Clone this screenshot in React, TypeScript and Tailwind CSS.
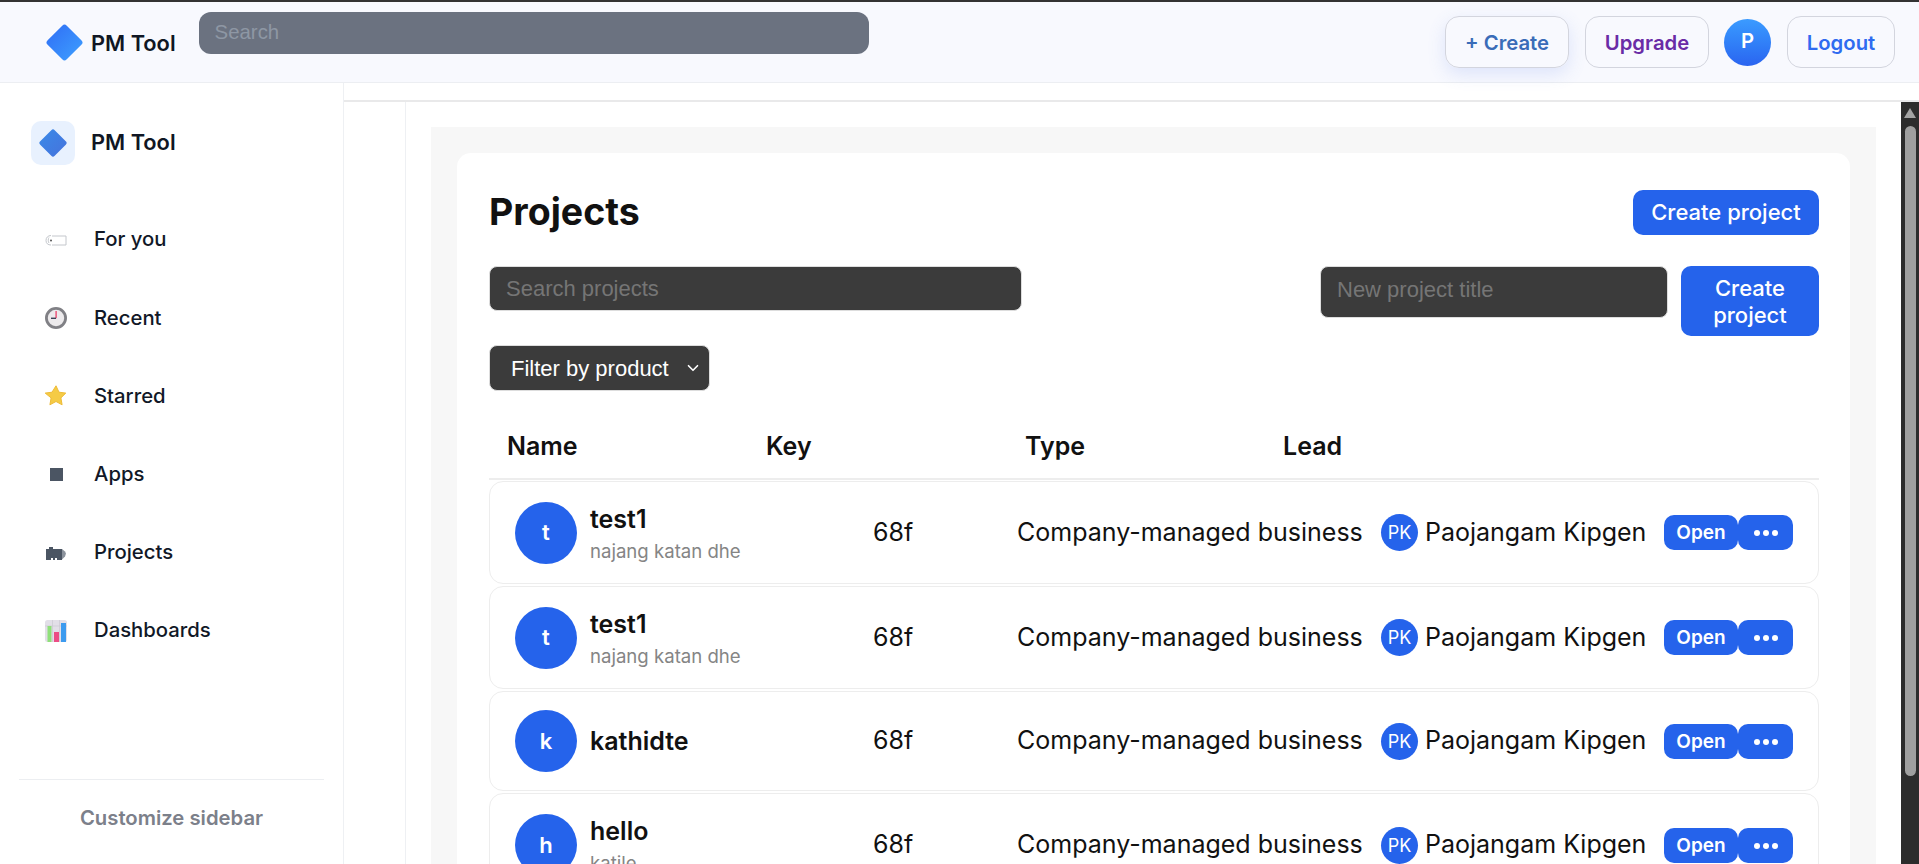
import { ChevronDown } from 'lucide-react';

const font = "font-['Inter',sans-serif]";

const projects = [
  { initial: 't', name: 'test1', desc: 'najang katan dhe', height: 'h-[103px]' },
  { initial: 't', name: 'test1', desc: 'najang katan dhe', height: 'h-[103px]' },
  { initial: 'k', name: 'kathidte', desc: '', height: 'h-[100px]' },
  { initial: 'h', name: 'hello', desc: 'katile', height: 'h-[104px]' },
];

function Diamond({ className, from, to, id }: { className: string; from: string; to: string; id: string }) {
  return (
    <svg viewBox="0 0 36 36" className={className}>
      <defs>
        <linearGradient id={id} x1="0" y1="0" x2="1" y2="1">
          <stop offset="0" stopColor={from} />
          <stop offset="1" stopColor={to} />
        </linearGradient>
      </defs>
      <path d="M15.8 1.6a3 3 0 0 1 4.4 0l14.2 14.2a3 3 0 0 1 0 4.4L20.2 34.4a3 3 0 0 1-4.4 0L1.6 20.2a3 3 0 0 1 0-4.4z" fill={`url(#${id})`} />
    </svg>
  );
}

function ForYouIcon() {
  return (
    <svg viewBox="0 0 22 12" className="w-[22px] h-[12px]">
      <path d="M7 2h14v9H7" fill="#fff" stroke="#c4c7cc" strokeWidth="1" />
      <path d="M6 1.5C3 1.5 1 3.5 1 6.5s2 4.5 5 4.5" fill="none" stroke="#c4c7cc" strokeWidth="1" />
      <path d="M4 3.5C3 4.5 3 8 4 9" fill="none" stroke="#c4c7cc" strokeWidth="1" />
      <circle cx="6" cy="6.5" r="1" fill="#555" />
    </svg>
  );
}

function ClockIcon() {
  return (
    <svg viewBox="0 0 22 22" className="w-[22px] h-[22px]">
      <circle cx="11" cy="11" r="9.6" fill="#eceaec" stroke="#808085" strokeWidth="2.800" />
      <rect x="10.4" y="4" width="1.4" height="7.2" fill="#ec4d72" />
      <rect x="6" y="10.6" width="5" height="1.4" fill="#3b4256" />
    </svg>
  );
}

function StarIcon() {
  return (
    <svg viewBox="0 0 22 22" className="w-[22px] h-[22px]">
      <path d="M11 .8l3 6.4 6.8.9-4.9 4.8 1.2 6.9-6.1-3.3-6.1 3.3 1.2-6.9L.2 8.1 7 7.2z" fill="#f5cb45" stroke="#eebb37" strokeWidth="1" strokeLinejoin="round" />
    </svg>
  );
}

function SquareIcon() {
  return <div className="w-[13px] h-[13px] bg-[#4b5563]" />;
}

function ProjectsIcon() {
  return (
    <svg viewBox="0 0 20 14" className="w-[20px] h-[14px]">
      <path d="M0 3h3V1h4v2h9v11H11v-2H9v2H7v-2H5v2H0z" fill="#4b5563" />
      <path d="M16 3l3 2.500 1 2-1 3-3 3z" fill="#8b929c" />
    </svg>
  );
}

function ChartIcon() {
  return (
    <svg viewBox="0 0 22 22" className="w-[22px] h-[22px]">
      <rect width="22" height="22" rx="2.500" fill="#e2dfe8" />
      <path d="M7.500 0v22M14.500 0v22M0 6h22" stroke="#cbc8d2" strokeWidth="0.700" />
      <rect x="2.500" y="6" width="4" height="16" fill="#8fe07a" />
      <rect x="9" y="12" width="5" height="10" fill="#ec4d85" />
      <rect x="16" y="3" width="5" height="19" fill="#3d9bef" />
    </svg>
  );
}

const navItems = [
  { label: 'For you', icon: <ForYouIcon /> },
  { label: 'Recent', icon: <ClockIcon /> },
  { label: 'Starred', icon: <StarIcon /> },
  { label: 'Apps', icon: <SquareIcon /> },
  { label: 'Projects', icon: <ProjectsIcon /> },
  { label: 'Dashboards', icon: <ChartIcon /> },
];

function Header() {
  return (
    <header className="h-[81px] shrink-0 flex items-center bg-[#f8f9fe] border-b border-[#eceef2] pl-[46px] pr-6">
      <Diamond id="hd" className="w-[37px] h-[37px]" from="#2f6df5" to="#3ea0ff" />
      <span className="ml-[8px] pt-[2px] text-[21.800px] font-semibold text-[#101624]">PM Tool</span>
      <input
        placeholder="Search"
        className="ml-[23px] mb-[18px] w-[670px] h-[42px] px-[16px] pb-[2px] rounded-[12px] bg-[#6b7280] text-[20.400px] outline-none placeholder:text-[#8e97a4] font-['Liberation_Sans',sans-serif]"
      />
      <div className="ml-auto flex items-center text-[20.300px] font-semibold">
        <button className="w-[124px] h-[52px] pt-[2px] rounded-[14px] border border-[#d3d5de] text-[#3a6cb8] shadow-[0_6px_18px_rgba(80,120,230,0.16)]">+ Create</button>
        <button className="ml-[16px] w-[124px] h-[52px] pt-[2px] rounded-[14px] border border-[#d3d5de] text-[#6a2ca6]">Upgrade</button>
        <div className="ml-[15px] w-[47px] h-[47px] rounded-full bg-gradient-to-b from-[#3b9bff] to-[#2b64f0] text-white flex items-center justify-center pb-[2px]">P</div>
        <button className="ml-[16px] w-[108px] h-[52px] pt-[2px] rounded-[14px] border border-[#d3d5de] text-[#2f6bf0]">Logout</button>
      </div>
    </header>
  );
}

function Sidebar() {
  return (
    <aside className="w-[344px] shrink-0 border-r border-[#eef0f3] bg-white flex flex-col px-[19px]">
      <div className="mt-[38px] ml-[12px] flex items-center">
        <div className="w-[44px] h-[44px] rounded-[10px] bg-[#e8f1fe] flex items-center justify-center">
          <Diamond id="sd" className="w-[28px] h-[28px]" from="#3a8ae8" to="#4672dc" />
        </div>
        <span className="ml-[16px] pb-[1px] text-[21.800px] font-semibold text-[#101624]">PM Tool</span>
      </div>
      <nav className="mt-[36px] flex flex-col">
        {navItems.map(item => (
          <div key={item.label} className="h-[78.200px] flex items-center">
            <div className="w-[22px] ml-[26px] flex justify-center">{item.icon}</div>
            <span className="ml-[27px] pb-[1px] text-[20.300px] font-medium text-[#111827]">{item.label}</span>
          </div>
        ))}
      </nav>
      <div className="mt-auto mb-[8px] border-t border-[#eceef1] h-[77px] flex items-center justify-center text-[20.300px] font-semibold text-[#7c808a]">
        Customize sidebar
      </div>
    </aside>
  );
}

function ProjectRow({ p }: { p: (typeof projects)[number] }) {
  return (
    <div className={`${p.height} mt-[2px] first:mt-0 shrink-0 rounded-[14px] border border-[#ededed] grid grid-cols-[358px_144px_364px_283px_auto] items-center pl-[25px] text-[25px] text-[#111]`}>
      <div className="flex items-center">
        <div className="w-[62px] h-[62px] rounded-full bg-[#2563eb] text-white text-[22px] font-semibold flex items-center justify-center">{p.initial}</div>
        <div className="ml-[13px]">
          <div className="text-[25px] leading-[32px] font-semibold">{p.name}</div>
          {p.desc && <div className="mt-[4px] text-[18.600px] leading-[24px] text-[#858585]">{p.desc}</div>}
        </div>
      </div>
      <div>68f</div>
      <div className="whitespace-nowrap">Company-managed business</div>
      <div className="flex items-center">
        <div className="w-[37px] h-[37px] rounded-full bg-[#2563eb] text-white text-[18px] flex items-center justify-center">PK</div>
        <span className="ml-[7px] whitespace-nowrap">Paojangam Kipgen</span>
      </div>
      <div className="flex text-white">
        <button className="w-[74px] h-[35px] pt-[2px] rounded-[10px] bg-[#2563eb] text-[19px] font-semibold">Open</button>
        <button className="w-[55px] h-[35px] pt-[1px] rounded-[10px] bg-[#2563eb] flex items-center justify-center gap-[3px]">
          <span className="w-[6px] h-[6px] rounded-full bg-white" />
          <span className="w-[6px] h-[6px] rounded-full bg-white" />
          <span className="w-[6px] h-[6px] rounded-full bg-white" />
        </button>
      </div>
    </div>
  );
}

function Scrollbar() {
  return (
    <div className="w-[18px] shrink-0 bg-[#2c2c2c] flex flex-col items-center">
      <svg viewBox="0 0 12 10" className="mt-[6px] w-[12px] h-[10px]">
        <path d="M6 0l6 10H0z" fill="#a3a3a3" />
      </svg>
      <div className="mt-[8px] w-[11px] h-[650px] rounded-full bg-[#9f9f9f]" />
    </div>
  );
}

export default function App() {
  return (
    <div className={`h-screen overflow-hidden flex flex-col border-t-2 border-[#333] bg-white ${font}`}>
      <Header />
      <div className="flex-1 min-h-0 flex">
        <Sidebar />
        <div className="flex-1 min-w-0 flex flex-col">
          <div className="h-[19px] shrink-0 border-b-2 border-[#e9e9ea]" />
          <div className="flex-1 min-h-0 flex">
            <div className="w-[62px] shrink-0 border-r border-[#eef0f3]" />
            <main className="flex-1 min-w-0 pt-[25px] pl-[25px] pr-[25px] overflow-hidden">
              <div className="h-full bg-[#f7f7f7] pt-[26px] px-[26px]">
                <div className="h-full bg-white rounded-t-[14px] pt-[28px] pl-[32px] pr-[31px] flex flex-col">
                  <div className="flex items-center justify-between h-[62px] shrink-0">
                    <h1 className="text-[37.500px] font-bold text-[#111]">Projects</h1>
                    <button className="w-[186px] h-[45px] rounded-[10px] bg-[#2563eb] text-white text-[22px] font-medium">Create project</button>
                  </div>
                  <div className="mt-[23px] flex items-start justify-between shrink-0">
                    <input
                      placeholder="Search projects"
                      className="w-[533px] h-[45px] px-[16px] rounded-[8px] bg-[#3b3b3b] text-[22px] text-white outline-none border border-[#ddd] placeholder:text-[#757575] font-['Liberation_Sans',sans-serif]"
                    />
                    <div className="flex items-start">
                      <input
                        placeholder="New project title"
                        className="w-[348px] h-[52px] px-[16px] pb-[4px] rounded-[8px] bg-[#3b3b3b] text-[22px] text-white outline-none border border-[#ddd] placeholder:text-[#757575] font-['Liberation_Sans',sans-serif]"
                      />
                      <button className="ml-[13px] w-[138px] h-[70px] pt-[1px] rounded-[10px] bg-[#2563eb] text-white text-[22px] leading-[27px] font-medium">Create project</button>
                    </div>
                  </div>
                  <div className="mt-[9px] w-[221px] h-[46px] shrink-0 rounded-[8px] bg-[#3b3b3b] border border-[#ddd] text-white text-[22px] flex items-center pl-[21px] font-['Liberation_Sans',sans-serif]">
                    <span>Filter by product</span>
                    <ChevronDown className="ml-auto mr-[7px] w-[18px] h-[18px]" strokeWidth={2.200} />
                  </div>
                  <div className="mt-[22px] h-[67px] pt-[3px] shrink-0 border-b-2 border-[#ededed] grid grid-cols-[259px_259px_258px_auto] items-center pl-[18px] text-[25px] font-semibold text-[#111]">
                    <span>Name</span>
                    <span>Key</span>
                    <span>Type</span>
                    <span>Lead</span>
                  </div>
                  <div className="mt-[1px] flex flex-col">
                    {projects.map((p, i) => (
                      <ProjectRow key={i} p={p} />
                    ))}
                  </div>
                </div>
              </div>
            </main>
            <Scrollbar />
          </div>
        </div>
      </div>
    </div>
  );
}
